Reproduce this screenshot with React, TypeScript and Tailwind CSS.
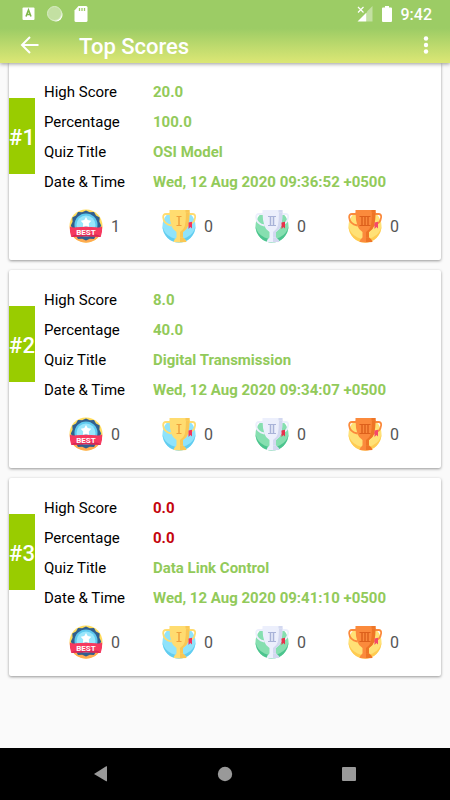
interface Score {
    rank: number;
    highScore: string;
    percentage: string;
    title: string;
    date: string;
    medals: number[];
}

const scores: Score[] = [
    { rank: 1, highScore: "20.0", percentage: "100.0", title: "OSI Model", date: "Wed, 12 Aug 2020 09:36:52 +0500", medals: [1, 0, 0, 0] },
    { rank: 2, highScore: "8.0", percentage: "40.0", title: "Digital Transmission", date: "Wed, 12 Aug 2020 09:34:07 +0500", medals: [0, 0, 0, 0] },
    { rank: 3, highScore: "0.0", percentage: "0.0", title: "Data Link Control", date: "Wed, 12 Aug 2020 09:41:10 +0500", medals: [0, 0, 0, 0] },
];

const trophies = [
    { id: "gold", bars: 1, disc: "#8fe3fb", discShade: "#62cdf0", cup: "#ffdc70", cupShade: "#f9c755", mark: "#efa03c", ribbon: "#f2345c" },
    { id: "silver", bars: 2, disc: "#86dfb0", discShade: "#4cc48e", cup: "#eceffc", cupShade: "#d3d8f0", mark: "#a9b3d8", ribbon: "#e8304a" },
    { id: "bronze", bars: 3, disc: "#ffe176", discShade: "#ffcb52", cup: "#fb8a3c", cupShade: "#ee7526", mark: "#dd601c", ribbon: "#f4476b" },
];

type TrophyColors = (typeof trophies)[number];

function BestBadge() {
    return (
        <svg viewBox="0 0 34 34" className="size-[34px]" aria-hidden="true">
            <circle cx="17" cy="17" r="16.500" fill="#ffdc5c" />
            <path d="M2.500 25a16.500 16.500 0 0 0 29 0z" fill="#ffab4f" />
            <path
                d="M17 1.500l3.800 1.800 4.200-.3 2 3.500 3.700 2-.3 4.200 1.800 3.800-1.800 3.800.3 4.200-3.700 2-2 3.500-4.200-.3-3.800 1.800-3.800-1.800-4.200.3-2-3.500-3.700-2 .3-4.200-1.800-3.800 1.800-3.800-.3-4.200 3.700-2L9 3l4.200.3z"
                fill="#315f8e"
            />
            <circle cx="17" cy="16" r="11.500" fill="#5ec9ee" />
            <circle cx="17" cy="16" r="9.500" fill="#98e6fb" />
            <path d="M17 8l1.700 3.100 3.600.7-2.500 2.700.4 3.700-3.200-1.500-3.200 1.500.4-3.700-2.500-2.700 3.600-.7z" fill="#fff" />
            <path d="M.8 17.500q3.200 1.300 6 .7 10.200-1 20.400 0 2.800.6 6-.7.300 5.500-1.500 10.500-14.700-1.500-29.400 0Q.5 23 .8 17.500z" fill="#f6395f" />
            <path d="M2.300 28q1.700-2.500 4.500-2.500 10.200-.8 20.400 0 2.800 0 4.500 2.500-14.700-1.500-29.400 0z" fill="#d92955" />
            <text x="17" y="25.500" textAnchor="middle" fontSize="8" fontWeight="700" fill="#fff" className="font-[Roboto,sans-serif]">
                BEST
            </text>
        </svg>
    );
}

function Trophy({ colors }: { colors: TrophyColors }) {
    const { bars, disc, discShade, cup, cupShade, mark, ribbon } = colors;
    const center = 17;
    const first = center - (bars - 1) * 1.5;
    const half = (bars - 1) * 1.5 + 2.5;
    return (
        <svg viewBox="0 0 34 34" className="size-[34px]" aria-hidden="true">
            <circle cx="17" cy="17" r="16.500" fill={disc} />
            <path d="M.5 17a16.500 16.500 0 0 0 33 0q-1.500 8-9 11.500-7.500 3-15 0Q2 25 .5 17z" fill={discShade} />
            <path d="M0 0h34v4.500H0z" fill="#fff" />
            <path
                d="M8 5H4Q1 5 1.200 8.500 1.500 15 9.500 16.500M27 5h3.500q3 0 2.600 3.500Q32.500 15 25 16.500"
                fill="none"
                stroke={cup}
                strokeWidth="1.800"
            />
            <path d="M7.500 3h20q0 8-1.500 14-1 3.500-5 6v6h-6.500v-6q-4-2.500-5-6Q7.500 11 7.500 3z" fill={cup} />
            <path d="M24 3h3.500q0 8-1.500 14-1 3.500-5 6v6h-3v-6q4-2.500 4.800-6Q24 11 24 3z" fill={cupShade} />
            <path d="M7.500 1h20v2.500h-20z" fill={cup} />
            <path d="M23.500 1h4v2.500h-4z" fill={cupShade} />
            <path d="M11.500 33q.5-3 3-4.500H21q2.700 1.500 3.500 4.500-6.500.8-13 0z" fill={cup} />
            <path d="M18 28.500h3q2.700 1.500 3.500 4.500H18z" fill={cupShade} />
            <path d={`M${center - half} 7.500h${half * 2}M${center - half} 16.500h${half * 2}`} stroke={mark} strokeWidth="1.200" />
            {Array.from({ length: bars }, (_, i) => (
                <path key={i} d={`M${first + i * 3} 7.500v9`} stroke={mark} strokeWidth="1.500" />
            ))}
            <path d="M26.500 13.500l3.500-.8v6.800l-1.600-1.500-1.900 2z" fill={ribbon} />
        </svg>
    );
}

function StatusBar() {
    return (
        <div className="flex h-[27px] items-center pl-[22px] pr-[18px] text-white">
            <svg viewBox="0 0 13 13" className="size-[13px]" aria-hidden="true">
                <rect x="0.500" y="0.500" width="12" height="12.500" rx="1" fill="currentColor" />
                <path d="M4 9.500l2.500-6.500 2.500 6.500M4.700 7.500h3.600" fill="none" stroke="#7fb84a" strokeWidth="1.600" />
            </svg>
            <svg viewBox="0 0 16 16" className="ml-3 size-4" aria-hidden="true">
                <circle cx="9" cy="9" r="6.500" fill="#fff" />
                <circle cx="7.500" cy="7.500" r="7" fill="#c3e0a2" stroke="#d8ecc4" />
            </svg>
            <svg viewBox="0 0 14 16" className="ml-[11px] h-4 w-[14px]" aria-hidden="true">
                <path d="M4.500 0H12q1.500 0 1.500 1.500v13Q13.500 16 12 16H2Q.5 16 .5 14.500V4.500z" fill="currentColor" />
                <path d="M5.500 2v3M8 2v3M10.500 2v3" stroke="#9ccc65" strokeWidth="1.300" />
            </svg>
            <svg viewBox="0 0 16 16" className="ml-auto size-4" aria-hidden="true">
                <path d="M15.500 0v15.500H10V5.500z" fill="#fff" opacity=".4" />
                <path d="M9.500 6.500v9H.5z" fill="currentColor" />
                <path d="M1 1l5.500 5.500M6.500 1L1 6.500" stroke="currentColor" strokeWidth="1.200" />
            </svg>
            <svg viewBox="0 0 10 16" className="ml-[9px] h-4 w-[10px]" aria-hidden="true">
                <path d="M3 0h4v1.500h2q1 0 1 1V15q0 1-1 1H1q-1 0-1-1V2.500q0-1 1-1h2z" fill="currentColor" />
            </svg>
            <span className="ml-[9px] pt-0.5 text-base font-medium">9:42</span>
        </div>
    );
}

function ScoreCard({ score }: { score: Score }) {
    const valueColor = score.highScore === "0.0" ? "text-[#c4050c]" : "text-[#92ca5a]";
    const rows = [
        { label: "High Score", value: score.highScore, color: valueColor },
        { label: "Percentage", value: score.percentage, color: valueColor },
        { label: "Quiz Title", value: score.title, color: "text-[#92ca5a]" },
        { label: "Date & Time", value: score.date, color: "text-[#92ca5a]" },
    ];

    return (
        <li className="rounded-[2px] bg-white pt-[15px] pb-[17px] shadow-[0_1px_3px_rgba(0,0,0,0.4)]">
            <div className="flex items-start">
                <div className="mt-[21px] flex h-[76px] w-[26px] shrink-0 items-center justify-center bg-[#99cc00] pt-0.5 text-[22px] font-medium text-white">
                    #{score.rank}
                </div>
                <dl className="min-w-0 flex-1 pl-2 text-[15px]">
                    {rows.map((row) => (
                        <div key={row.label} className="flex h-[30px] items-center">
                            <dt className="w-[110px] shrink-0 pl-px text-black">{row.label}</dt>
                            <dd className={`truncate font-bold ${row.color}`}>{row.value}</dd>
                        </div>
                    ))}
                </dl>
            </div>
            <div className="mt-3 grid grid-cols-4 pl-[60px] text-base text-[#555]">
                <div className="flex items-center gap-2">
                    <BestBadge />
                    <span className="pt-px">{score.medals[0]}</span>
                </div>
                {trophies.map((colors, i) => (
                    <div key={colors.id} className="flex items-center gap-2">
                        <Trophy colors={colors} />
                        <span className="pt-px">{score.medals[i + 1]}</span>
                    </div>
                ))}
            </div>
        </li>
    );
}

export default function App() {
    return (
        <div className="flex min-h-screen flex-col bg-[#fafafa] font-[Roboto,sans-serif]">
            <header className="relative z-10 bg-linear-to-b from-[#9ccc65] from-45% to-[#dce775] shadow-[0_1px_4px_rgba(0,0,0,0.4)]">
                <StatusBar />
                <div className="flex h-9 items-center pl-[18px] pr-3 text-white">
                    <button type="button" aria-label="Back" className="size-6">
                        <svg viewBox="0 0 24 24" className="size-6" fill="none" stroke="currentColor" strokeWidth="2" aria-hidden="true">
                            <path d="M20.500 12H4.500M12 4l-8 8 8 8" />
                        </svg>
                    </button>
                    <h1 className="ml-[37px] pt-1 text-[22px] leading-7 font-medium">Top Scores</h1>
                    <button type="button" aria-label="More options" className="ml-auto size-6">
                        <svg viewBox="0 0 24 24" className="size-6" fill="currentColor" aria-hidden="true">
                            <circle cx="12" cy="5.500" r="2.200" />
                            <circle cx="12" cy="12" r="2.200" />
                            <circle cx="12" cy="18.500" r="2.200" />
                        </svg>
                    </button>
                </div>
            </header>

            <main className="flex-1">
                <ul className="-mt-px flex flex-col gap-[10px] px-[9px] pb-[10px]">
                    {scores.map((score) => (
                        <ScoreCard key={score.rank} score={score} />
                    ))}
                </ul>
            </main>

            <nav className="grid h-[52px] grid-cols-3 place-items-center bg-black px-[39px] text-[#999]">
                <button type="button" aria-label="Back" className="size-4">
                    <svg viewBox="0 0 16 16" className="size-4" fill="currentColor" aria-hidden="true">
                        <path d="M14 .5v14.500q0 .5-.8.200L1 8 13.200.3q.8-.3.8.2z" />
                    </svg>
                </button>
                <button type="button" aria-label="Home" className="size-4">
                    <svg viewBox="0 0 16 16" className="size-4" fill="currentColor" aria-hidden="true">
                        <circle cx="8" cy="8" r="7.200" />
                    </svg>
                </button>
                <button type="button" aria-label="Recent apps" className="size-4">
                    <svg viewBox="0 0 16 16" className="size-4" fill="currentColor" aria-hidden="true">
                        <rect x="1" y="1" width="14" height="14" rx="1" />
                    </svg>
                </button>
            </nav>
        </div>
    );
}
